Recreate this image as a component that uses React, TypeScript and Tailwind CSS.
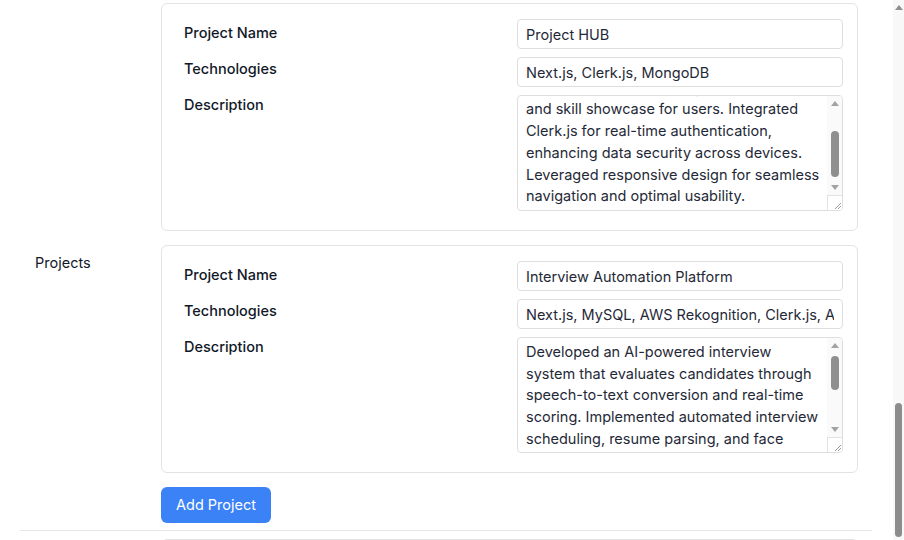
import React, { useEffect, useRef } from 'react';

type Project = {
  name: string;
  tech: string;
  description: string;
  scrollToEnd?: boolean;
  thumbTop: number;
  thumbHeight: number;
};

const projects: Project[] = [
  {
    name: 'Project HUB',
    tech: 'Next.js, Clerk.js, MongoDB',
    description: [
      'Built a full-stack platform for developers to',
      'publish projects, enabling collaboration',
      'and skill showcase for users. Integrated',
      'Clerk.js for real-time authentication,',
      'enhancing data security across devices.',
      'Leveraged responsive design for seamless',
      'navigation and optimal usability.',
    ].join('\n'),
    scrollToEnd: true,
    thumbTop: 20,
    thumbHeight: 46,
  },
  {
    name: 'Interview Automation Platform',
    tech: 'Next.js, MySQL, AWS Rekognition, Clerk.js, AI/ML',
    description: [
      'Developed an AI-powered interview',
      'system that evaluates candidates through',
      'speech-to-text conversion and real-time',
      'scoring. Implemented automated interview',
      'scheduling, resume parsing, and face',
      'recognition using AWS Rekognition to',
      'verify candidate identity. Designed an',
      'admin dashboard for recruiters to review',
      'results, compare candidates and export',
      'reports, reducing manual screening time',
      'significantly while keeping the hiring',
      'process fair and consistent.',
    ].join('\n'),
    thumbTop: 3,
    thumbHeight: 34,
  },
];

const earlier = [
  { title: 'Personal Info', fields: ['Full Name', 'Email', 'Phone', 'Location', 'LinkedIn'] },
  { title: 'Summary', fields: ['Headline', 'About'] },
  { title: 'Education', fields: ['Institute', 'Degree', 'Year', 'Grade'] },
  { title: 'Experience', fields: ['Company', 'Role', 'Duration', 'Details'] },
  { title: 'Skills', fields: ['Languages', 'Frameworks', 'Tools'] },
];

function ArrowUp({ color = '#a3a3a3' }: { color?: string }) {
  return (
    <svg width="8" height="5" viewBox="0 0 8 5">
      <polygon points="0,5 4,0 8,5" fill={color} />
    </svg>
  );
}

function ArrowDown({ color = '#a3a3a3' }: { color?: string }) {
  return (
    <svg width="8" height="5" viewBox="0 0 8 5">
      <polygon points="0,0 8,0 4,5" fill={color} />
    </svg>
  );
}

function ProjectCard({ project }: { project: Project }) {
  const areaRef = useRef<HTMLTextAreaElement>(null);

  useEffect(() => {
    if (project.scrollToEnd && areaRef.current) {
      areaRef.current.scrollTop = areaRef.current.scrollHeight;
    }
  }, [project.scrollToEnd]);

  return (
    <div className="border border-[#e3e3e3] rounded-md bg-white px-[14px] pt-[15px] pb-[19px]">
      <div className="grid grid-cols-2 gap-x-[15px]">
        <div className="flex flex-col gap-2 pl-2">
          <span className="h-7 leading-7 text-[14.5px] font-medium text-[#111827]">Project Name</span>
          <span className="h-7 leading-7 text-[14.5px] font-medium text-[#111827]">Technologies</span>
          <span className="h-7 leading-7 text-[14.5px] font-medium text-[#111827]">Description</span>
        </div>
        <div className="flex flex-col gap-2">
          <input
            readOnly
            value={project.name}
            className="h-[30px] w-full border border-[#dedede] rounded-[4px] px-2 text-[14.5px] text-[#1f2937] outline-none"
          />
          <input
            readOnly
            value={project.tech}
            className="h-[30px] w-full border border-[#dedede] rounded-[4px] px-2 text-[14.5px] text-[#1f2937] outline-none"
          />
          <div className="h-[116px] flex border border-[#dedede] rounded-[4px] overflow-hidden">
            <textarea
              ref={areaRef}
              readOnly
              wrap="off"
              value={project.description}
              className="flex-1 min-w-0 h-full resize-none overflow-hidden whitespace-pre pl-2 pr-0 py-[3px] text-[14.5px] leading-[21.7px] text-[#1f2937] outline-none"
            />
            {/* textarea scrollbar */}
            <div className="w-[15px] flex flex-col bg-[#fafafa]">
              <div className="h-[15px] flex items-center justify-center">
                <ArrowUp />
              </div>
              <div className="flex-1">
                <div
                  className="mx-auto w-[8px] rounded-full bg-[#8f8f8f]"
                  style={{ marginTop: project.thumbTop, height: project.thumbHeight }}
                />
              </div>
              <div className="h-[15px] flex items-center justify-center">
                <ArrowDown />
              </div>
              <div className="h-[15px] border-t border-l border-[#e2e2e2] bg-white flex items-end justify-end">
                <svg width="9" height="9" viewBox="0 0 9 9">
                  <line x1="8" y1="2" x2="2" y2="8" stroke="#9a9a9a" strokeWidth="1" />
                  <line x1="8" y1="5" x2="5" y2="8" stroke="#9a9a9a" strokeWidth="1" />
                </svg>
              </div>
            </div>
          </div>
        </div>
      </div>
    </div>
  );
}

export default function App() {
  const scrollerRef = useRef<HTMLDivElement>(null);
  const sectionRef = useRef<HTMLElement>(null);

  useEffect(() => {
    if (scrollerRef.current && sectionRef.current) {
      scrollerRef.current.scrollTop = sectionRef.current.offsetTop - 3;
    }
  }, []);

  return (
    <div className="flex h-[540px] bg-white font-['Inter','Noto_Sans',sans-serif] text-[#111827]">
      <div ref={scrollerRef} className="relative flex-1 min-w-0 overflow-hidden">
        <div className="pl-5 pr-[21px]">
          {/* sections above the fold */}
          <div className="h-[1560px] overflow-hidden">
            {earlier.map((sec) => (
              <div key={sec.title} className="border-b border-[#e5e7eb]">
                <div className="grid grid-cols-[141px_1fr] items-center py-2">
                  <div className="pl-[15px] text-[14.5px]">{sec.title}</div>
                  <div className="pr-[14px]">
                    <div className="border border-[#e3e3e3] rounded-md px-[14px] py-[15px] flex flex-col gap-2">
                      {sec.fields.map((f) => (
                        <div key={f} className="grid grid-cols-2 gap-x-[15px]">
                          <span className="pl-2 leading-7 text-[14.5px] font-medium">{f}</span>
                          <div className="h-[30px] border border-[#dedede] rounded-[4px]" />
                        </div>
                      ))}
                    </div>
                  </div>
                </div>
              </div>
            ))}
          </div>

          <section
            ref={sectionRef}
            className="grid grid-cols-[141px_1fr] items-center pb-[7px] border-b border-[#e5e7eb]"
          >
            <div className="pl-[15px] text-[14.5px] text-[#111827]">Projects</div>
            <div className="pr-[14px] flex flex-col gap-[14px]">
              {projects.map((p) => (
                <ProjectCard key={p.name} project={p} />
              ))}
              <div>
                <button className="h-9 px-[15px] rounded-md bg-[#3b82f6] text-white text-[14.5px]">
                  Add Project
                </button>
              </div>
            </div>
          </section>

          <div className="grid grid-cols-[141px_1fr] pt-2">
            <div />
            <div className="pr-[14px]">
              <div className="h-[24px] border-t border-x border-[#e3e3e3] rounded-t-md" />
            </div>
          </div>
        </div>
      </div>

      {/* page scrollbar */}
      <div className="w-[11px] flex flex-col bg-[#f8f8f8]">
        <div className="h-[15px] flex items-center justify-center">
          <ArrowUp color="#8f8f8f" />
        </div>
        <div className="mt-[388px] mx-auto w-[7px] h-[134px] rounded-full bg-[#8c8c8c]" />
      </div>
    </div>
  );
}
